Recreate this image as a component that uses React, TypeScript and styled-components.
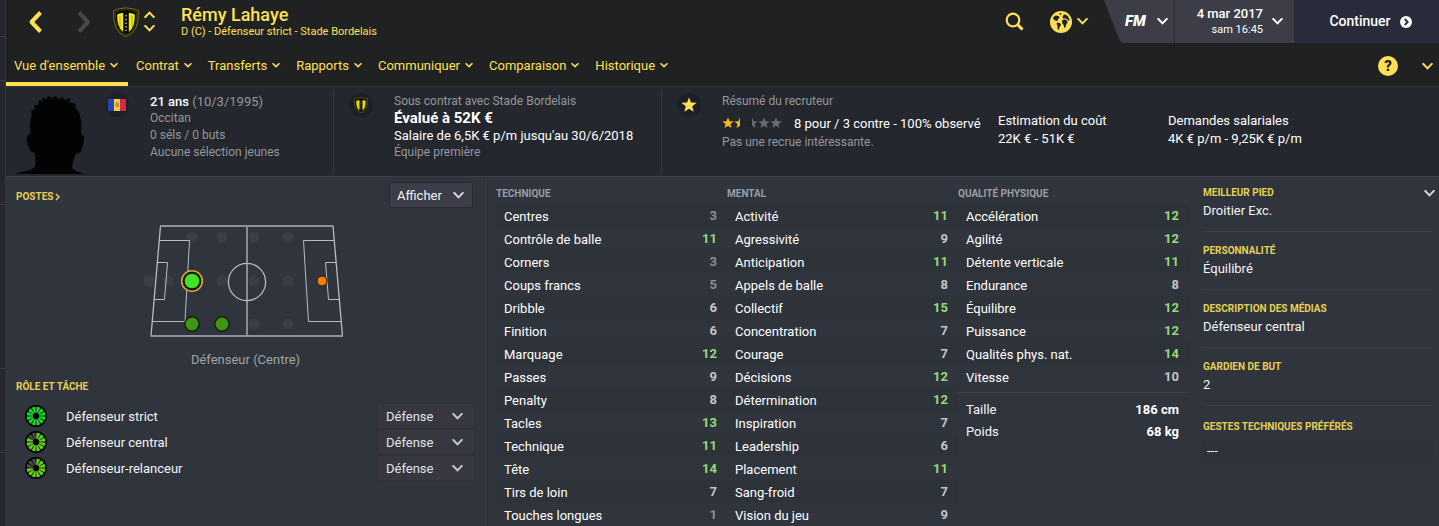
import React from "react";
import styled, { createGlobalStyle } from "styled-components";

const c = {
  yellow: "#fee054",
  label: "#e6cf57",
  header: "#202122",
  info: "#25272e",
  body: "#30343c",
  line: "#3b3f48",
  muted: "#94979b",
  green: "#96d97b",
};

const Global = createGlobalStyle`
  *, *::before, *::after { box-sizing: border-box; }
  body {
    margin: 0;
    background: ${c.body};
    color: #f4f5f6;
    font-family: Roboto, "Liberation Sans", sans-serif;
    font-size: 13px;
    line-height: 17px;
  }
  button, select { font: inherit; color: inherit; background: none; border: 0; padding: 0; margin: 0; cursor: pointer; }
  h1, h2, p { margin: 0; }
  a { color: inherit; text-decoration: none; }
  svg { display: block; flex: none; }
`;

const Page = styled.div`
  display: grid;
  grid-template-columns: 6px minmax(0, 1fr);
  min-height: 100vh;
`;

const Rail = styled.aside`
  display: flex;
  flex-direction: column;
  background: #262631;
  border-right: 1px solid #343541;
`;

const RailSlot = styled.span<{ $size: number }>`
  height: ${(p) => p.$size}px;
  border-bottom: 1px solid #3a3b46;
`;

const Screen = styled.main`
  display: flex;
  flex-direction: column;
  min-width: 0;
`;

const TopBar = styled.header`
  display: flex;
  height: 43px;
  background: ${c.header};
  color: ${c.yellow};
`;

const HistoryNav = styled.div`
  display: flex;
  align-items: center;
  gap: 33px;
  padding-left: 21px;
  width: 107px;
`;

const IconButton = styled.button`
  display: flex;
  align-items: center;
  gap: 5px;
`;

const ClubBadge = styled.div`
  display: flex;
  align-items: center;
  gap: 5px;
  width: 68px;
`;

const Stepper = styled.div`
  display: flex;
  flex-direction: column;
  gap: 7px;
`;

const PlayerTitle = styled.div`
  flex: 1;
  padding-top: 5px;
`;

const PlayerName = styled.h1`
  font-size: 18px;
  line-height: 19px;
  font-weight: 500;
`;

const PlayerRole = styled.p`
  font-size: 11px;
  line-height: 15px;
`;

const Tools = styled.div`
  display: flex;
  align-items: center;
  gap: 26px;
  padding-right: 16px;
`;

const Cluster = styled.div`
  display: flex;
  color: #fff;
  clip-path: polygon(0 0, 100% 0, 100% 100%, 18px 100%, 15px 39px);
`;

const FmButton = styled.button`
  display: flex;
  align-items: center;
  gap: 11px;
  width: 71px;
  padding-left: 21px;
  background: #3c3d47;
  border-right: 1px solid #292a33;
`;

const FmMark = styled.span`
  font-size: 15px;
  font-weight: 900;
  font-style: italic;
`;

const DateButton = styled.button`
  display: flex;
  align-items: center;
  justify-content: flex-end;
  gap: 9px;
  width: 119px;
  padding-right: 11px;
  background: #3c3d47;
  text-align: right;
`;

const DateText = styled.span`
  display: flex;
  flex-direction: column;
  font-size: 11px;
  line-height: 15px;
  strong { font-size: 13px; line-height: 16px; font-weight: 500; }
`;

const ContinueButton = styled.button`
  display: flex;
  align-items: center;
  justify-content: center;
  gap: 9px;
  width: 145px;
  padding-left: 8px;
  background: #292b3a;
  font-size: 14px;
  font-weight: 500;
`;

const NavBar = styled.nav`
  display: flex;
  height: 43px;
  background: ${c.header};
  color: ${c.yellow};
`;

const NavLink = styled.a<{ $active?: boolean }>`
  display: flex;
  align-items: center;
  gap: 5px;
  padding: 6px ${(p) => (p.$active ? 10 : 8)}px 0 8px;
  border-bottom: 4px solid ${(p) => (p.$active ? c.yellow : "transparent")};
`;

const NavTools = styled.div`
  display: flex;
  align-items: center;
  gap: 24px;
  margin-left: auto;
  padding: 3px 6px 0 0;
`;

const HelpButton = styled.button`
  width: 20px;
  height: 20px;
  border-radius: 50%;
  && { background: ${c.yellow}; color: ${c.header}; }
  font-size: 15px;
  line-height: 20px;
  font-weight: 900;
`;

const InfoBar = styled.section`
  display: grid;
  grid-template-columns: 328fr 328fr 777fr;
  height: 91px;
  background: ${c.info};
  border-top: 2px solid #2a2b35;
  border-bottom: 1px solid ${c.line};
`;

const InfoCell = styled.div`
  display: flex;
  min-width: 0;
  margin: 1px 0 2px;
  border-right: 1px solid #363840;
  &:last-child { border-right: 0; }
`;

const Portrait = styled.div`
  display: flex;
  align-items: flex-end;
  width: 98px;
`;

const RoundIcon = styled.div<{ $offset: number }>`
  display: flex;
  align-items: center;
  justify-content: center;
  flex: none;
  width: 24px;
  height: 24px;
  margin: 4px 21px 0 ${(p) => p.$offset}px;
  border-radius: 50%;
  background: #1f2025;
`;

const Lines = styled.div`
  flex: 1;
  padding-top: 4px;
  white-space: nowrap;
`;

const Line = styled.p<{ $tone?: "muted" | "big" }>`
  font-size: ${(p) => (p.$tone === "muted" ? 12 : p.$tone === "big" ? 15 : 13)}px;
  font-weight: ${(p) => (p.$tone === "big" ? 700 : 400)};
  color: ${(p) => (p.$tone === "muted" ? c.muted : "#fff")};
  strong { font-weight: 500; }
  span { color: ${c.muted}; }
`;

const RatingLine = styled.div`
  display: flex;
  align-items: center;
  gap: 12px;
  height: 24px;
  padding-top: 2px;
  color: #fff;
`;

const ScoutGrid = styled.div`
  display: grid;
  flex: 1;
  grid-template-columns: 276fr 170fr 271fr;
`;

const Estimate = styled.div`
  padding-top: 23px;
  line-height: 18px;
  color: #fff;
  white-space: nowrap;
`;

const Body = styled.div`
  display: grid;
  flex: 1;
  grid-template-columns: 480fr 707fr 246fr;
  background: ${c.body};
`;

const Positions = styled.section`
  display: flex;
  flex-direction: column;
  padding: 5px 10px 0;
  border-right: 1px solid #3a3d46;
`;

const PanelHead = styled.div`
  display: flex;
  justify-content: space-between;
  align-items: flex-start;
  padding-right: 2px;
`;

const Label = styled.h2`
  font-size: 10px;
  line-height: 18px;
  font-weight: 700;
  color: ${c.label};
`;

const LabelLink = styled.a`
  display: flex;
  align-items: center;
  gap: 2px;
  padding-top: 6px;
`;

const ShowButton = styled.button`
  display: flex;
  align-items: center;
  justify-content: space-between;
  width: 84px;
  height: 26px;
  && { padding: 0 8px 0 7px; background: #3c3d48; border: 1px solid #292b33; }
  border-radius: 3px;
`;

const PitchFigure = styled.figure`
  display: flex;
  flex-direction: column;
  align-items: center;
  margin: 12px 0 9px;
  figcaption { padding-top: 11px; line-height: 18px; color: #a0a3a7; }
`;

const RoleRow = styled.div`
  display: flex;
  align-items: center;
  height: 26px;
  padding-left: 9px;
  gap: 19px;
  label { flex: 1; }
`;

const RoleList = styled.div`
  padding-top: 7px;
`;

const SelectBox = styled.div`
  display: grid;
  grid-template-columns: 1fr 22px;
  align-items: center;
  width: 98px;
  height: 26px;
  background: #363741;
  border: 1px solid #2f3139;
  select {
    grid-area: 1 / 1 / 2 / 3;
    appearance: none;
    height: 100%;
    padding-left: 8px;
    color: #e2e3e5;
  }
  svg { grid-area: 1 / 2; pointer-events: none; }
`;

const Attributes = styled.section`
  display: grid;
  grid-template-columns: repeat(3, 1fr);
  align-items: start;
  padding: 7px 4px 0 10px;
`;

const AttrTable = styled.table`
  width: 100%;
  border-collapse: collapse;
  thead th {
    height: 20px;
    padding: 0 0 2px;
    font-size: 10px;
    font-weight: 700;
    text-align: left;
    color: #9b9ea3;
  }
  tbody th { padding: 2px 0 0 8px; font-weight: 400; text-align: left; color: #fff; }
  tbody td { padding: 0 10px 0 0; text-align: right; }
  tbody tr { height: 23px; }
  tbody tr:nth-child(odd) { background: #2e3239; }
`;

const BodyTable = styled.table`
  width: 100%;
  margin-top: 4px;
  padding-top: 5px;
  border-top: 1px solid ${c.line};
  border-spacing: 0;
  th { height: 22px; padding: 0 0 0 8px; font-weight: 400; text-align: left; }
  td { padding: 0 10px 0 0; font-weight: 700; text-align: right; color: #fff; }
`;

const Value = styled.td<{ $n: number }>`
  font-weight: 700;
  color: ${(p) => (p.$n > 10 ? c.green : p.$n > 5 ? "#c3c5c9" : "#8b8e94")};
`;

const Profile = styled.section`
  padding: 0 6px 0 10px;
`;

const Trait = styled.div`
  padding: 10px 0 11px;
  border-bottom: 1px solid ${c.line};
  p { line-height: 18px; }
  &:first-child { padding-top: 7px; }
  &:last-child { padding-top: 12px; border-bottom: 0; }
`;

const TraitHead = styled.div`
  display: flex;
  align-items: center;
  justify-content: space-between;
  margin-right: -2px;
`;

const EmptyRow = styled.div`
  height: 24px;
  margin-top: 3px;
  padding-left: 4px;
  line-height: 24px;
  background: #2e3239;
`;

type ChevronProps = { w?: number; h?: number; stroke?: number; dir?: "up" | "down"; color?: string };

const Chevron = ({ w = 11, h = 7, stroke = 2, dir = "down", color = "currentColor" }: ChevronProps) => {
  const top = stroke / 2;
  const low = h - stroke / 2;
  const [a, b] = dir === "down" ? [top, low] : [low, top];
  return (
    <svg width={w} height={h} fill="none" stroke={color} strokeWidth={stroke} strokeLinecap="square" aria-hidden="true">
      <path d={`M${top + 0.3} ${a}L${w / 2} ${b - (dir === "down" ? 0.6 : -0.6)}L${w - top - 0.3} ${a}`} />
    </svg>
  );
};

const Arrow = ({ back }: { back?: boolean }) => (
  <svg width="16" height="24" fill="none" stroke={back ? c.yellow : "#45474a"} strokeWidth="4" aria-hidden="true">
    <path d={back ? "M13.5 2.5L4.5 12L13.5 21.5" : "M3 2.5L12 12L3 21.5"} strokeLinejoin="round" />
  </svg>
);

const Crest = ({ size }: { size: number }) => (
  <svg width={size} height={Math.round(size * 1.15)} viewBox="0 0 26 30" aria-hidden="true">
    <path d="M.6 3.6Q13-1.8 25.400 3.600Q26.600 25 13 29.600Q-.6 25 .6 3.600Z" fill="#17180f" stroke="#8c8614" strokeWidth=".8" />
    <path d="M2.400 5Q13 .4 23.600 5Q24.500 23.500 13 27.800Q1.500 23.500 2.400 5Z" fill="#090a06" stroke="#4d4b12" strokeWidth=".6" />
    <path d="M4.200 7.500Q7 5.600 10.200 6V25Q3.600 20 4.200 7.500Z" fill="#f0e918" />
    <path d="M21.800 7.500Q19 5.600 15.800 6V25Q22.400 20 21.800 7.500Z" fill="#f0e918" />
    <path d="M13 8V24" stroke="#a6a266" strokeWidth="1.800" strokeDasharray="1.500 2.200" />
    <path d="M7 9V20M19 9V20" stroke="#aaa40c" strokeWidth=".8" />
  </svg>
);

const SearchIcon = () => (
  <svg width="19" height="19" fill="none" stroke={c.yellow} aria-hidden="true">
    <circle cx="8" cy="8" r="6.300" strokeWidth="2.200" />
    <path d="M12.800 12.800L16.600 16.600" strokeWidth="3" strokeLinecap="round" />
  </svg>
);

const GlobeIcon = () => (
  <svg width="22" height="22" viewBox="0 0 22 22" aria-hidden="true">
    <circle cx="11" cy="11" r="11" fill={c.yellow} />
    <g fill={c.header}>
      <path d="M3 6.500L5.500 4.500L8.500 5L9.600 6.500L8 8.200L7 10.300L5.300 9.600L3.600 8.600Z" />
      <path d="M7.200 11.500L10.200 12.200L11 14L9.500 16.200L8.800 19L7.500 18L7.600 15L6.600 13Z" />
      <path d="M12.200 9.200L14.500 8.300L17 9.500L17.600 11.500L16 14L15.500 16.500L14.300 17L13.600 14L12.100 12Z" />
      <path d="M12.500 5.500L14.200 3.300L17.500 4.800L19.600 8.500L18.600 10L17.200 8.200L14.900 7.300L13 7.600Z" />
      <path d="M9 2.500L11.500 2L10.800 4.300Z" />
    </g>
  </svg>
);

const Silhouette = () => (
  <svg width="80" height="79" viewBox="6 10 80 79" role="img" aria-label="Rémy Lahaye">
    <path
      fill="#020303"
      d="M14 89L30 85L35 82L35.500 76L35 68L31 66.500L28 61L26.500 54L27.500 50L30.500 49L30 40L31 31L32 31L31 26L35 24L34 20L38 20L39 15L43 16L42 12.500L47 14L48 10.500L52 13L56 10.800L58 14L63 12L64 15L71 13L69 17L76 19L75 22L79 27L81 35L81.500 42L81 49L84 51.500L83.500 59L80.500 67L75.500 69.500L73 76L72 83L76 86L84 89Z"
    />
  </svg>
);

const Flag = () => (
  <svg width="18" height="12" role="img" aria-label="Andorre">
    <rect width="6" height="12" fill="#2746b5" />
    <rect x="6" width="6" height="12" fill="#f3cf3c" />
    <rect x="12" width="6" height="12" fill="#d5274a" />
    <rect x="7.500" y="3.500" width="3.500" height="4.500" rx="1" fill="#b98d4c" />
  </svg>
);

const starPath = "M6 .3L7.500 4.200L11.700 4.400L8.400 7L9.500 11.100L6 8.800L2.500 11.100L3.600 7L.3 4.400L4.500 4.200Z";

const Rating = () => (
  <svg width="60" height="12" role="img" aria-label="Une étoile et demie sur cinq">
    <defs>
      <clipPath id="left-half"><rect width="6" height="12" /></clipPath>
      <clipPath id="right-half"><rect x="6" width="6" height="12" /></clipPath>
    </defs>
    <path d={starPath} fill="#f5bd18" />
    <g transform="translate(12 0)">
      <path d={starPath} fill="#f5bd18" clipPath="url(#left-half)" />
      <path d={starPath} fill="#1f2025" clipPath="url(#right-half)" />
    </g>
    <g transform="translate(24 0)">
      <path d={starPath} fill="#1f2025" clipPath="url(#left-half)" />
      <path d={starPath} fill="#6a6c72" clipPath="url(#right-half)" />
    </g>
    <path d={starPath} fill="#6a6c72" transform="translate(36 0)" />
    <path d={starPath} fill="#6a6c72" transform="translate(48 0)" />
  </svg>
);

const emptySpots = [
  [71, 27], [101, 27], [133, 27], [167, 27],
  [28, 71], [47, 71], [101, 71], [133, 71], [167, 71],
  [133, 114], [167, 114],
];

const Pitch = () => (
  <svg width="240" height="120" viewBox="5 10 240 120" aria-hidden="true">
    {emptySpots.map(([x, y]) => (
      <circle key={`${x}-${y}`} cx={x} cy={y} r="5.500" fill="#3b3e46" />
    ))}
    <g fill="none" stroke="#b9bbc0" strokeWidth="1">
      <path d="M39.500 16L30 126M212 16L221.500 126M126 16V126" strokeWidth="1.300" />
      <path d="M39 16H212.500M29.500 126H222" stroke="#8f9198" strokeWidth="2" />
      <path d="M38 30.500H68.500L64 111.500H31.500M36.500 52.500H46.500L43.500 89.500H33" />
      <path d="M213 30.500H182.500L187.500 111.500H220.500M215 52.500H204.500L207.500 89.500H218.500" />
      <circle cx="126" cy="72" r="18.600" strokeWidth="1.300" />
    </g>
    <circle cx="71" cy="71" r="10.300" fill="#101a0d" stroke="#dba92d" strokeWidth="1.600" />
    <circle cx="71" cy="71" r="7.300" fill="#41e329" />
    {[71, 101].map((x) => (
      <circle key={x} cx={x} cy="114" r="7.200" fill="#429413" stroke="#12200a" strokeWidth="1.500" />
    ))}
    <circle cx="201" cy="71" r="5" fill="#f27c0c" stroke="#2b1a0c" strokeWidth="1" />
  </svg>
);

const RoleWheel = ({ filled, color }: { filled: number; color: string }) => (
  <svg width="22" height="22" viewBox="-11 -11 22 22" aria-hidden="true">
    <circle r="11" fill="#040604" />
    {Array.from({ length: 12 }, (_, i) => (
      <path key={i} d="M-.7-3.200L-1.900-9.100Q0-9.700 1.900-9.100L.7-3.200Z" fill={i < filled ? color : "#4c4a4a"} transform={`rotate(${i * 30 + 15})`} />
    ))}
  </svg>
);

const menu = ["Vue d'ensemble", "Contrat", "Transferts", "Rapports", "Communiquer", "Comparaison", "Historique"];

const groups: { title: string; rows: [string, number][] }[] = [
  {
    title: "TECHNIQUE",
    rows: [
      ["Centres", 3], ["Contrôle de balle", 11], ["Corners", 3], ["Coups francs", 5], ["Dribble", 6],
      ["Finition", 6], ["Marquage", 12], ["Passes", 9], ["Penalty", 8], ["Tacles", 13],
      ["Technique", 11], ["Tête", 14], ["Tirs de loin", 7], ["Touches longues", 1],
    ],
  },
  {
    title: "MENTAL",
    rows: [
      ["Activité", 11], ["Agressivité", 9], ["Anticipation", 11], ["Appels de balle", 8], ["Collectif", 15],
      ["Concentration", 7], ["Courage", 7], ["Décisions", 12], ["Détermination", 12], ["Inspiration", 7],
      ["Leadership", 6], ["Placement", 11], ["Sang-froid", 7], ["Vision du jeu", 9],
    ],
  },
  {
    title: "QUALITÉ PHYSIQUE",
    rows: [
      ["Accélération", 12], ["Agilité", 12], ["Détente verticale", 11], ["Endurance", 8],
      ["Équilibre", 12], ["Puissance", 12], ["Qualités phys. nat.", 14], ["Vitesse", 10],
    ],
  },
];

const roles = [
  { id: "strict", name: "Défenseur strict", filled: 12, color: "#1fd62c" },
  { id: "central", name: "Défenseur central", filled: 10, color: "#64cf1d" },
  { id: "relanceur", name: "Défenseur-relanceur", filled: 9, color: "#64cf1d" },
];

const traits = [
  ["MEILLEUR PIED", "Droitier Exc."],
  ["PERSONNALITÉ", "Équilibré"],
  ["DESCRIPTION DES MÉDIAS", "Défenseur central"],
  ["GARDIEN DE BUT", "2"],
];

export default function App() {
  return (
    <>
      <Global />
      <Page>
        <Rail>
          {[37, 44, 124, 164, 84].map((size, i) => <RailSlot key={i} $size={size} />)}
        </Rail>
        <Screen>
          <TopBar>
            <HistoryNav>
              <IconButton aria-label="Précédent"><Arrow back /></IconButton>
              <IconButton aria-label="Suivant"><Arrow /></IconButton>
            </HistoryNav>
            <ClubBadge>
              <Crest size={26} />
              <Stepper>
                <IconButton aria-label="Joueur précédent"><Chevron dir="up" /></IconButton>
                <IconButton aria-label="Joueur suivant"><Chevron /></IconButton>
              </Stepper>
            </ClubBadge>
            <PlayerTitle>
              <PlayerName>Rémy Lahaye</PlayerName>
              <PlayerRole>D (C) - Défenseur strict - Stade Bordelais</PlayerRole>
            </PlayerTitle>
            <Tools>
              <IconButton aria-label="Rechercher"><SearchIcon /></IconButton>
              <IconButton aria-label="Monde"><GlobeIcon /><Chevron /></IconButton>
            </Tools>
            <Cluster>
              <FmButton><FmMark>FM</FmMark><Chevron /></FmButton>
              <DateButton>
                <DateText><strong>4 mar 2017</strong>sam 16:45</DateText>
                <Chevron />
              </DateButton>
              <ContinueButton>
                Continuer
                <svg width="12" height="12" aria-hidden="true">
                  <circle cx="6" cy="6" r="6" fill="#fff" />
                  <path d="M4.700 3L7.700 6L4.700 9" fill="none" stroke="#292b3a" strokeWidth="1.800" />
                </svg>
              </ContinueButton>
            </Cluster>
          </TopBar>
          <NavBar>
            {menu.map((item, i) => (
              <NavLink key={item} href="#" $active={i === 0}>{item}<Chevron w={8} h={5} stroke={1.5} /></NavLink>
            ))}
            <NavTools>
              <HelpButton aria-label="Aide">?</HelpButton>
              <IconButton aria-label="Plus"><Chevron /></IconButton>
            </NavTools>
          </NavBar>
          <InfoBar>
            <InfoCell>
              <Portrait><Silhouette /></Portrait>
              <RoundIcon $offset={1}><Flag /></RoundIcon>
              <Lines>
                <Line><strong>21 ans</strong> <span>(10/3/1995)</span></Line>
                <Line $tone="muted">Occitan</Line>
                <Line $tone="muted">0 séls / 0 buts</Line>
                <Line $tone="muted">Aucune sélection jeunes</Line>
              </Lines>
            </InfoCell>
            <InfoCell>
              <RoundIcon $offset={15}><Crest size={14} /></RoundIcon>
              <Lines>
                <Line $tone="muted">Sous contrat avec Stade Bordelais</Line>
                <Line $tone="big">Évalué à 52K €</Line>
                <Line>Salaire de 6,5K € p/m jusqu'au 30/6/2018</Line>
                <Line $tone="muted">Équipe première</Line>
              </Lines>
            </InfoCell>
            <InfoCell>
              <RoundIcon $offset={15}>
                <svg width="16" height="16" viewBox="0 0 12 12" aria-hidden="true"><path d={starPath} fill={c.yellow} /></svg>
              </RoundIcon>
              <ScoutGrid>
                <Lines>
                  <Line $tone="muted">Résumé du recruteur</Line>
                  <RatingLine><Rating />8 pour / 3 contre - 100% observé</RatingLine>
                  <Line $tone="muted">Pas une recrue intéressante.</Line>
                </Lines>
                <Estimate><p>Estimation du coût</p><p>22K € - 51K €</p></Estimate>
                <Estimate><p>Demandes salariales</p><p>4K € p/m - 9,25K € p/m</p></Estimate>
              </ScoutGrid>
            </InfoCell>
          </InfoBar>
          <Body>
            <Positions>
              <PanelHead>
                <LabelLink href="#">
                  <Label>POSTES</Label>
                  <svg width="5" height="8" fill="none" stroke={c.label} strokeWidth="1.500" aria-hidden="true"><path d="M1 1L4 4L1 7" /></svg>
                </LabelLink>
                <ShowButton>Afficher<Chevron color="#d5d6da" /></ShowButton>
              </PanelHead>
              <PitchFigure>
                <Pitch />
                <figcaption>Défenseur (Centre)</figcaption>
              </PitchFigure>
              <Label>RÔLE ET TÂCHE</Label>
              <RoleList>
                {roles.map((role) => (
                  <RoleRow key={role.id}>
                    <RoleWheel filled={role.filled} color={role.color} />
                    <label htmlFor={role.id}>{role.name}</label>
                    <SelectBox>
                      <select id={role.id} defaultValue="Défense"><option>Défense</option></select>
                      <Chevron color="#c9cace" />
                    </SelectBox>
                  </RoleRow>
                ))}
              </RoleList>
            </Positions>
            <Attributes>
              {groups.map((group, i) => (
                <div key={group.title}>
                  <AttrTable>
                    <thead><tr><th colSpan={2}>{group.title}</th></tr></thead>
                    <tbody>
                      {group.rows.map(([name, n]) => (
                        <tr key={name}><th scope="row">{name}</th><Value $n={n}>{n}</Value></tr>
                      ))}
                    </tbody>
                  </AttrTable>
                  {i === 2 && (
                    <BodyTable>
                      <tbody>
                        <tr><th scope="row">Taille</th><td>186 cm</td></tr>
                        <tr><th scope="row">Poids</th><td>68 kg</td></tr>
                      </tbody>
                    </BodyTable>
                  )}
                </div>
              ))}
            </Attributes>
            <Profile>
              {traits.map(([title, text], i) => (
                <Trait key={title}>
                  <TraitHead>
                    <Label>{title}</Label>
                    {i === 0 && <IconButton aria-label="Changer de panneau"><Chevron color="#d5d6da" /></IconButton>}
                  </TraitHead>
                  <p>{text}</p>
                </Trait>
              ))}
              <Trait>
                <Label>GESTES TECHNIQUES PRÉFÉRÉS</Label>
                <EmptyRow>---</EmptyRow>
              </Trait>
            </Profile>
          </Body>
        </Screen>
      </Page>
    </>
  );
}
